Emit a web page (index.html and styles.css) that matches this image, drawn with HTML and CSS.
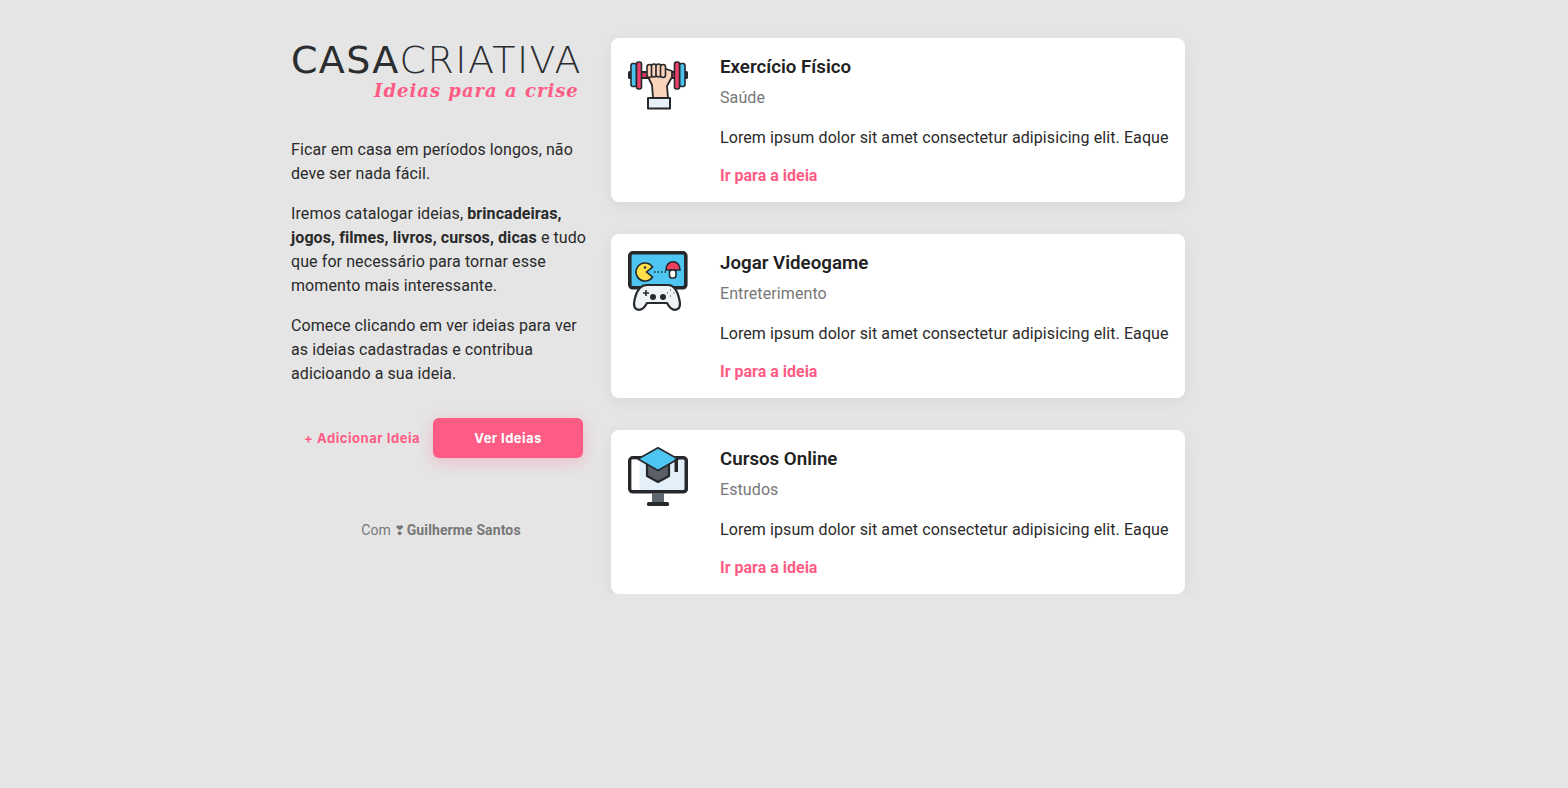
FILE: index.html
```html
<!DOCTYPE html>
<html lang="pt-BR">

<head>
    <meta charset="utf-8">
    <title>Casa Criativa</title>
    <link rel="stylesheet" href="styles.css">
</head>

<body>
    <div class="container">
        <section class="sidebar">
            <header class="logo">
                <div class="logo-name"><b>CASA</b>CRIATIVA</div>
                <div class="logo-tag">Ideias para a crise</div>
            </header>

            <div class="about">
                <p>Ficar em casa em períodos longos, não deve ser nada fácil.</p>
                <p>Iremos catalogar ideias, <strong>brincadeiras, jogos, filmes, livros, cursos, dicas</strong> e tudo que for necessário para tornar esse momento mais interessante.</p>
                <p>Comece clicando em ver ideias para ver as ideias cadastradas e contribua adicioando a sua ideia.</p>
            </div>

            <div class="actions">
                <a class="add" href="#">+ Adicionar Ideia</a>
                <a class="button" href="#">Ver Ideias</a>
            </div>

            <footer class="credit">Com <span class="heart">❣</span> <strong>Guilherme Santos</strong></footer>
        </section>

        <section class="ideas">
            <article class="card">
                <svg class="icon" viewBox="0 0 60 60">
                    <rect x="0" y="16" width="60" height="8" rx="1.500" fill="#26282c"/>
                    <rect x="14" y="18" width="32" height="4" fill="#d8365f"/>
                    <rect x="3" y="8.500" width="5.500" height="23" rx="2" fill="#4cc3ee" stroke="#26282c" stroke-width="1.600"/>
                    <rect x="8.500" y="7" width="5" height="27" rx="2" fill="#ee3f6e" stroke="#26282c" stroke-width="1.600"/>
                    <rect x="51.500" y="8.500" width="5.500" height="23" rx="2" fill="#4cc3ee" stroke="#26282c" stroke-width="1.600"/>
                    <rect x="46.500" y="7" width="5" height="27" rx="2" fill="#ee3f6e" stroke="#26282c" stroke-width="1.600"/>
                    <path d="M20 22l4 8 1 13h15l-1-12 5-9 0-6-6-2z" fill="#fbd3bb" stroke="#26282c" stroke-width="1.800" stroke-linejoin="round"/>
                    <rect x="19" y="9.500" width="5" height="13" rx="2.500" fill="#fbd3bb" stroke="#26282c" stroke-width="1.600"/>
                    <rect x="23.500" y="9" width="5" height="13" rx="2.500" fill="#fbd3bb" stroke="#26282c" stroke-width="1.600"/>
                    <rect x="28" y="9" width="5" height="13" rx="2.500" fill="#fbd3bb" stroke="#26282c" stroke-width="1.600"/>
                    <rect x="32.500" y="9.500" width="5" height="13" rx="2.500" fill="#fbd3bb" stroke="#26282c" stroke-width="1.600"/>
                    <path d="M20 43h22v10.500h-22z" fill="#e9f1f8" stroke="#26282c" stroke-width="2" stroke-linejoin="round"/>
                </svg>
                <div class="card-body">
                    <h3>Exercício Físico</h3>
                    <div class="category">Saúde</div>
                    <p>Lorem ipsum dolor sit amet consectetur adipisicing elit. Eaque</p>
                    <a href="#">Ir para a ideia</a>
                </div>
            </article>

            <article class="card">
                <svg class="icon" viewBox="0 0 60 60">
                    <rect x="1.800" y="1.800" width="56" height="35" rx="3" fill="#4fc6f2" stroke="#26282c" stroke-width="3.600"/>
                    <path d="M17 12a9 9 0 1 0 7.500 14l-6-5 6-5a9 9 0 0 0-7.500-4z" fill="#ffe04a" stroke="#26282c" stroke-width="1.600"/>
                    <circle cx="17" cy="16.500" r="1.200" fill="#26282c"/>
                    <path d="M26 21h12" stroke="#26282c" stroke-width="1.500" stroke-dasharray="1.500 2"/>
                    <path d="M38 19c0-11 14-11 14 0z" fill="#ee3f5e" stroke="#26282c" stroke-width="1.600"/>
                    <rect x="41.500" y="19" width="6.500" height="8" rx="2.500" fill="#fff" stroke="#26282c" stroke-width="1.600"/>
                    <rect x="24" y="36" width="12" height="4" fill="#26282c"/>
                    <path d="M19 34h21c6 0 9 5 11 13 2 7 1 11.800-4 11.800-4 0-6-3-8-6.800h-20c-2 3.800-4 6.800-8 6.800-5 0-6-4.800-4-11.800 2-8 6-13 12-13z" fill="#eef3f8" stroke="#26282c" stroke-width="2.200" stroke-linejoin="round"/>
                    <path d="M15 42h6M18 39v6" stroke="#26282c" stroke-width="1.600"/>
                    <circle cx="25" cy="46" r="3" fill="#26282c"/>
                    <circle cx="35" cy="46" r="3" fill="#26282c"/>
                    <path d="M42 39h1M45.500 42h1M39 42h1M42 45h1" stroke="#26282c" stroke-width="1.200"/>
                </svg>
                <div class="card-body">
                    <h3>Jogar Videogame</h3>
                    <div class="category">Entreterimento</div>
                    <p>Lorem ipsum dolor sit amet consectetur adipisicing elit. Eaque</p>
                    <a href="#">Ir para a ideia</a>
                </div>
            </article>

            <article class="card">
                <svg class="icon" viewBox="0 0 60 60">
                    <rect x="1.800" y="10.800" width="56.500" height="34" rx="3" fill="#e4f0f9" stroke="#26282c" stroke-width="3.600"/>
                    <rect x="3.600" y="12.600" width="8" height="30" fill="#ffffff"/>
                    <rect x="24" y="46" width="12" height="9" fill="#5f6670"/>
                    <rect x="19" y="55" width="22" height="4" rx="1.500" fill="#26282c"/>
                    <path d="M19 15v14l11 6 11-6v-14z" fill="#5a5f68" stroke="#26282c" stroke-width="2.200" stroke-linejoin="round"/>
                    <path d="M30 .800L50 12 30 23.500 10 12z" fill="#4fc6f2" stroke="#26282c" stroke-width="1.600" stroke-linejoin="round"/>
                    <rect x="46.500" y="12" width="3.500" height="13" fill="#26282c"/>
                </svg>
                <div class="card-body">
                    <h3>Cursos Online</h3>
                    <div class="category">Estudos</div>
                    <p>Lorem ipsum dolor sit amet consectetur adipisicing elit. Eaque</p>
                    <a href="#">Ir para a ideia</a>
                </div>
            </article>
        </section>
    </div>
</body>

</html>
```

FILE: styles.css
```css
* {
    box-sizing: border-box;
    margin: 0;
    padding: 0;
}

body {
    background-color: #e5e5e5;
    color: #2a2a2a;
    font-family: "Roboto", sans-serif;
    font-size: 16px;
    line-height: 24px;
    letter-spacing: 0.09px;
}

a {
    text-decoration: none;
}

.container {
    display: flex;
    gap: 20px;
    width: 894px;
    margin-left: 291px;
    padding-top: 38px;
}

.sidebar {
    width: 300px;
    flex-shrink: 0;
}

.logo {
    height: 100px;
    padding-top: 5px;
}

.logo-name {
    font-family: "DejaVu Sans", sans-serif;
    font-size: 38px;
    font-weight: 200;
    line-height: 34px;
    letter-spacing: 1.400px;
    color: #2b2d30;
    white-space: nowrap;
}

.logo-name b {
    font-weight: 400;
    letter-spacing: 1.300px;
}

.logo-tag {
    padding-top: 4px;
    padding-left: 83px;
    font-family: "DejaVu Serif", serif;
    font-size: 18px;
    font-style: italic;
    font-weight: 700;
    line-height: 20px;
    letter-spacing: 1px;
    color: #ff5c85;
    white-space: nowrap;
}

.about p {
    margin-bottom: 16px;
}

.actions {
    display: flex;
    align-items: center;
    margin-top: 32px;
    padding-left: 13px;
}

.add {
    width: 129px;
    font-family: "Inter", sans-serif;
    font-size: 13px;
    font-weight: 700;
    letter-spacing: 0.55px;
    color: #ff5c85;
    white-space: nowrap;
}

.button {
    width: 150px;
    height: 40px;
    border-radius: 6px;
    background-color: #ff5c85;
    box-shadow: 0 4px 16px rgba(255, 92, 133, 0.3);
    font-family: "Inter", sans-serif;
    font-size: 13px;
    font-weight: 700;
    line-height: 40px;
    letter-spacing: 0.45px;
    text-align: center;
    color: #ffffff;
}

.credit {
    margin-top: 60px;
    font-size: 14px;
    letter-spacing: 0.03px;
    text-align: center;
    color: #777777;
}

.credit strong {
    margin-left: -2px;
    letter-spacing: 0.12px;
}

.heart {
    font-family: "DejaVu Sans", sans-serif;
    font-size: 13px;
    font-weight: 700;
}

.ideas {
    flex: 1;
    display: flex;
    flex-direction: column;
    gap: 32px;
}

.card {
    display: flex;
    height: 164px;
    padding: 17px 16px 0 17px;
    border-radius: 8px;
    background-color: #ffffff;
    box-shadow: 0 4px 16px rgba(0, 0, 0, 0.06);
}

.icon {
    width: 60px;
    height: 60px;
    flex-shrink: 0;
    margin-right: 32px;
}

.card-body h3 {
    font-size: 18.720px;
    font-weight: 600;
    line-height: 24px;
    letter-spacing: 0;
    color: #222222;
}

.category {
    margin-top: 7px;
    color: #777777;
}

.card-body p {
    margin-top: 16px;
    white-space: nowrap;
}

.card-body a {
    display: block;
    margin-top: 14px;
    font-weight: 700;
    letter-spacing: 0;
    color: #ff5c85;
}
```
